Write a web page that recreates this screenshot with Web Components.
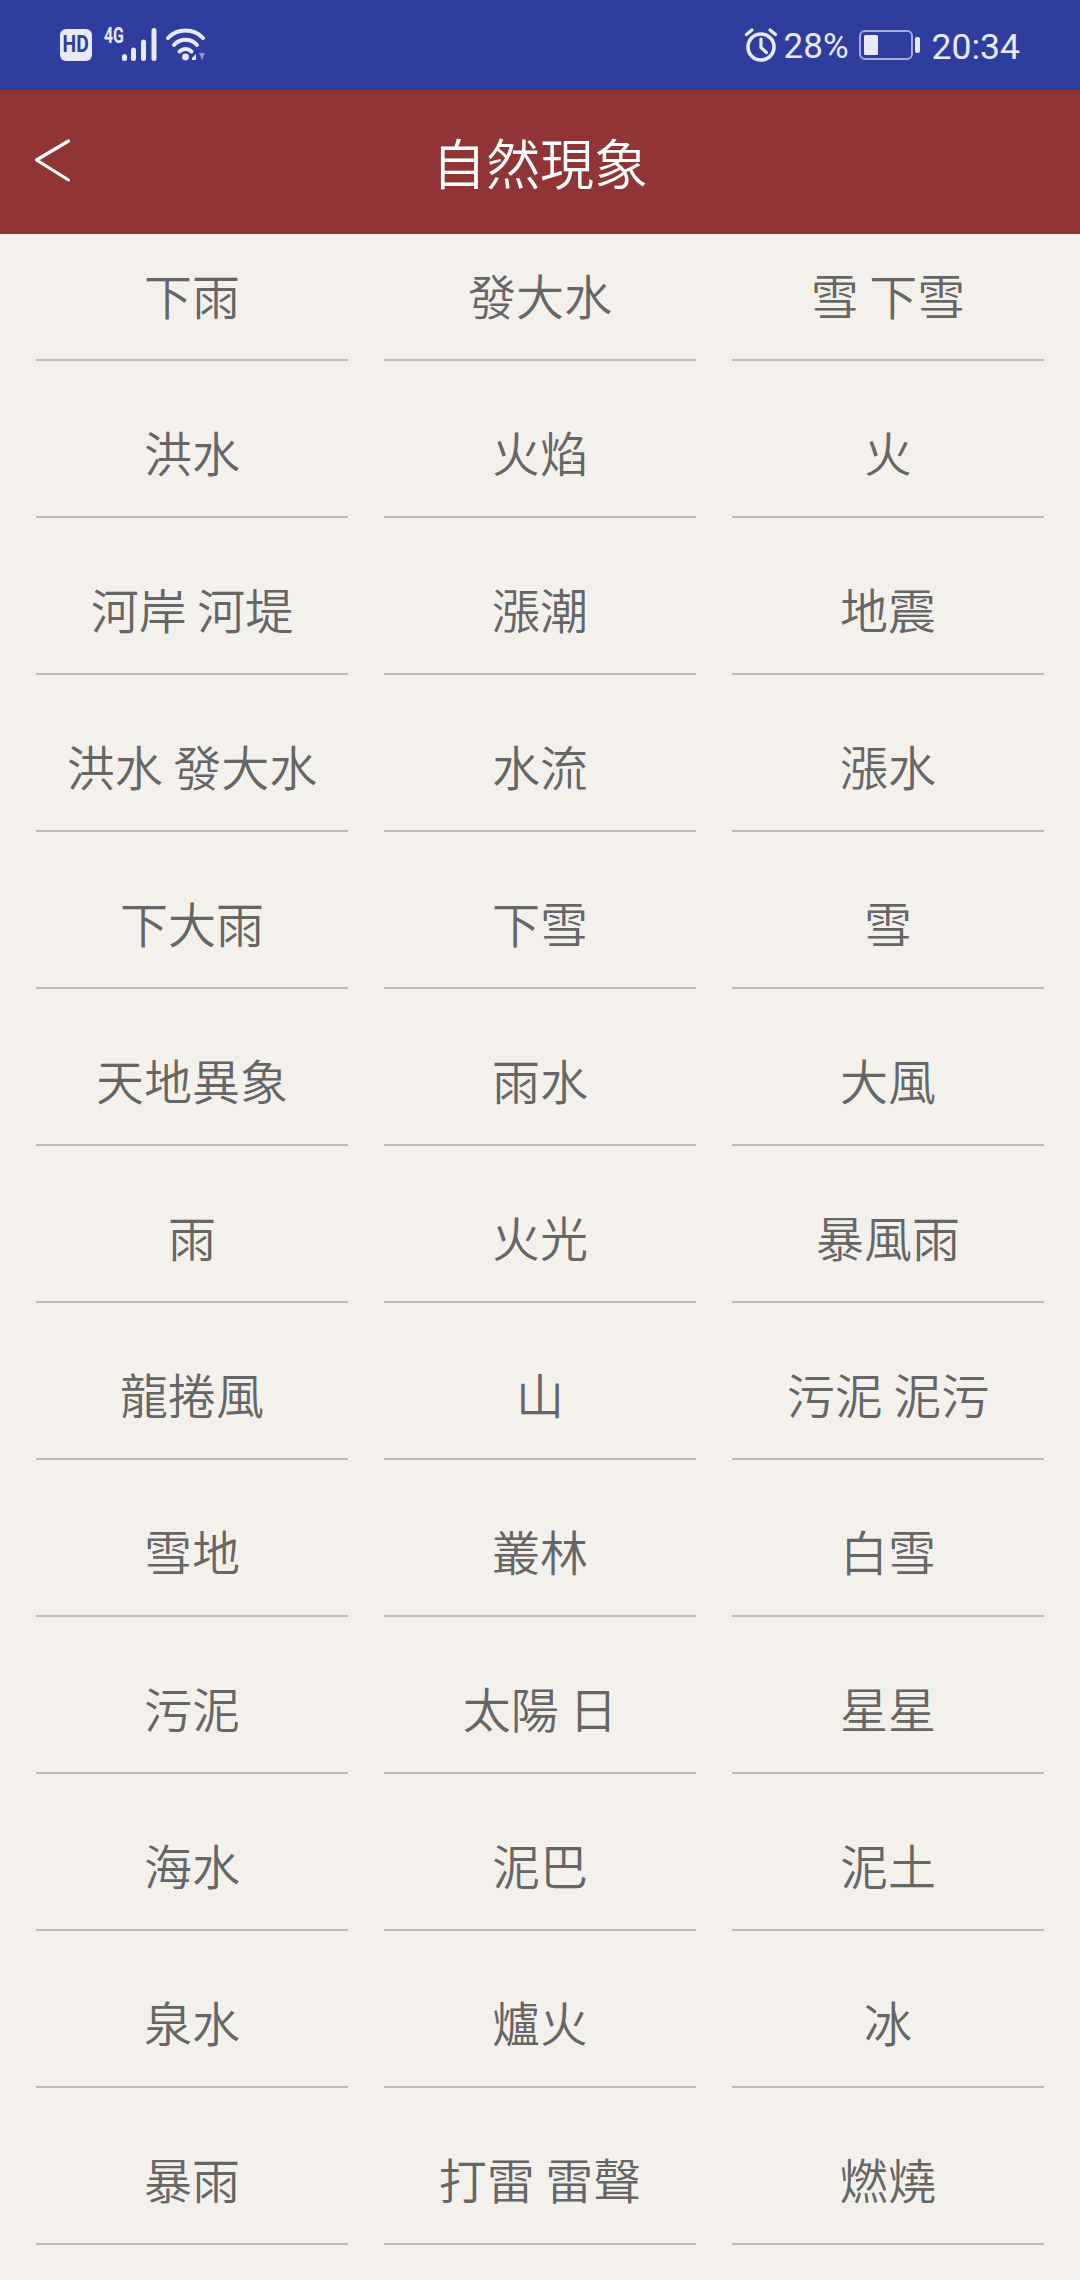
<!DOCTYPE html>
<html>
<head>
<meta charset="utf-8">
<title>自然現象</title>
<style>
html, body { margin: 0; padding: 0; background: #f4f1ed; }
body { width: 1080px; height: 2280px; overflow: hidden; display: flex; flex-direction: column; font-family: "Noto Sans CJK TC", "Noto Sans CJK SC", sans-serif; }
</style>
</head>
<body>
<status-bar></status-bar>
<app-header>自然現象</app-header>
<term-grid></term-grid>

<script>
class StatusBar extends HTMLElement {
  constructor() {
    super();
    this.attachShadow({ mode: 'open' });
    this.shadowRoot.innerHTML = `
<style>
:host {
  display: flex;
  flex: none;
  height: 90px;
  align-items: center;
  justify-content: space-between;
  padding: 0 60px;
  background: #2f3e9e;
  color: #e9eaf8;
  font-family: Roboto, sans-serif;
}
.side { display: flex; align-items: center; }
svg { display: block; flex: none; }
.hd {
  display: flex;
  align-items: center;
  justify-content: center;
  width: 32px; height: 32px;
  border-radius: 6px;
  background: #e9eaf8;
  color: #2f3e9e;
  font-size: 23px;
  font-weight: 700;
  line-height: 32px;
}
.hd span { display: inline-block; transform: scaleX(.84); }
.net { display: flex; align-items: flex-start; height: 34px; margin-left: 12px; }
.g4 {
  width: 17px;
  font-size: 22px;
  font-weight: 700;
  line-height: 16px;
  white-space: nowrap;
  transform: scaleX(.72);
  transform-origin: left top;
}
.txt { font-size: 35px; line-height: 40px; position: relative; top: 2px; }
</style>
<div class="side">
  <div class="hd"><span>HD</span></div>
  <div class="net">
    <div class="g4">4G</div>
    <svg width="36" height="34" viewBox="0 0 36 34" fill="none" stroke="#e9eaf8" stroke-width="5" stroke-linecap="round">
      <path d="M3.500 30.500v-2M12.500 30.500V22M22.500 30.500V14M33 30.500V2.500"/>
    </svg>
  </div>
  <svg style="margin-left:9px" width="40" height="34" viewBox="0 0 40 34" fill="none" stroke="#e9eaf8" stroke-linecap="round">
    <path stroke-width="4" d="M2 10C11 0 28 0 37 10"/>
    <path stroke-width="4" d="M8 17C14 10 25 10 31 17"/>
    <path stroke-width="4" d="M13.500 23.500C17 20 22 20 25.500 23.500"/>
    <circle cx="19.500" cy="29" r="3.400" fill="#e9eaf8" stroke="none"/>
    <path d="M26 30l4-4v6h-4z" fill="#e9eaf8" stroke="none"/>
    <path d="M33 25h6l-3 7z" fill="#8f95cf" stroke="none"/>
  </svg>
</div>
<div class="side">
  <svg width="34" height="34" viewBox="0 0 34 34" fill="none" stroke="#e9eaf8" stroke-linecap="round" stroke-linejoin="round">
    <circle cx="17" cy="19" r="13" stroke-width="3.600"/>
    <path stroke-width="3.200" d="M17 11v8.500l5.500 5"/>
    <path stroke-width="3.200" d="M2.500 6.500L8 2M31.500 6.500L26 2"/>
  </svg>
  <div class="txt" style="margin-left:6px">28%</div>
  <svg style="margin-left:10px" width="62" height="32" viewBox="0 0 62 32" fill="none">
    <rect x="1" y="2" width="52" height="28" rx="5" stroke="#a6abdc" stroke-width="2"/>
    <rect x="5" y="6" width="14" height="20" rx="1.500" fill="#e9eaf8"/>
    <rect x="56" y="8" width="5" height="16" rx="2" fill="#e9eaf8"/>
  </svg>
  <div class="txt" style="margin-left:11px;font-size:35.500px">20:34</div>
</div>`;
  }
}

class AppHeader extends HTMLElement {
  constructor() {
    super();
    this.attachShadow({ mode: 'open' });
    this.shadowRoot.innerHTML = `
<style>
:host {
  display: flex;
  flex: none;
  position: relative;
  box-sizing: border-box;
  height: 144px;
  padding-bottom: 1px;
  align-items: center;
  justify-content: center;
  background: #903436;
  color: #fff;
  font-size: 54px;
  font-weight: 350;
}
button {
  position: absolute;
  left: 30px;
  top: 44px;
  width: 46px;
  height: 52px;
  padding: 0;
  border: none;
  background: none;
}
svg { display: block; }
</style>
<button title="Back">
  <svg width="46" height="52" viewBox="0 0 46 52" fill="none" stroke="#fff" stroke-width="3.200" stroke-linecap="round" stroke-linejoin="round">
    <path d="M38.500 7L6.500 26l32 20"/>
  </svg>
</button>
<slot></slot>`;
  }
}

class TermCell extends HTMLElement {
  constructor() {
    super();
    this.attachShadow({ mode: 'open' });
    this.shadowRoot.innerHTML = `
<style>
:host {
  display: flex;
  height: 157px;
  box-sizing: border-box;
  padding-top: 25px;
  align-items: center;
  justify-content: center;
  border-bottom: 2px solid #bcbbb8;
  color: #666;
  font-size: 48px;
  font-weight: 350;
  white-space: nowrap;
}
</style>
<slot></slot>`;
  }
}

const TERMS = [
  '下雨', '發大水', '雪 下雪',
  '洪水', '火焰', '火',
  '河岸 河堤', '漲潮', '地震',
  '洪水 發大水', '水流', '漲水',
  '下大雨', '下雪', '雪',
  '天地異象', '雨水', '大風',
  '雨', '火光', '暴風雨',
  '龍捲風', '山', '污泥 泥污',
  '雪地', '叢林', '白雪',
  '污泥', '太陽 日', '星星',
  '海水', '泥巴', '泥土',
  '泉水', '爐火', '冰',
  '暴雨', '打雷 雷聲', '燃燒',
];

class TermGrid extends HTMLElement {
  constructor() {
    super();
    this.attachShadow({ mode: 'open' });
    this.shadowRoot.innerHTML = `
<style>
:host {
  display: block;
  flex: 1;
  min-height: 0;
  overflow: hidden;
}
.grid {
  display: grid;
  grid-template-columns: repeat(3, 312px);
  column-gap: 36px;
  padding: 0 36px;
  margin-top: -30px;
}
</style>
<div class="grid"></div>`;
    const grid = this.shadowRoot.querySelector('.grid');
    for (const t of TERMS) {
      const cell = document.createElement('term-cell');
      cell.textContent = t;
      grid.appendChild(cell);
    }
  }
}

customElements.define('status-bar', StatusBar);
customElements.define('app-header', AppHeader);
customElements.define('term-cell', TermCell);
customElements.define('term-grid', TermGrid);
</script>
</body>
</html>
